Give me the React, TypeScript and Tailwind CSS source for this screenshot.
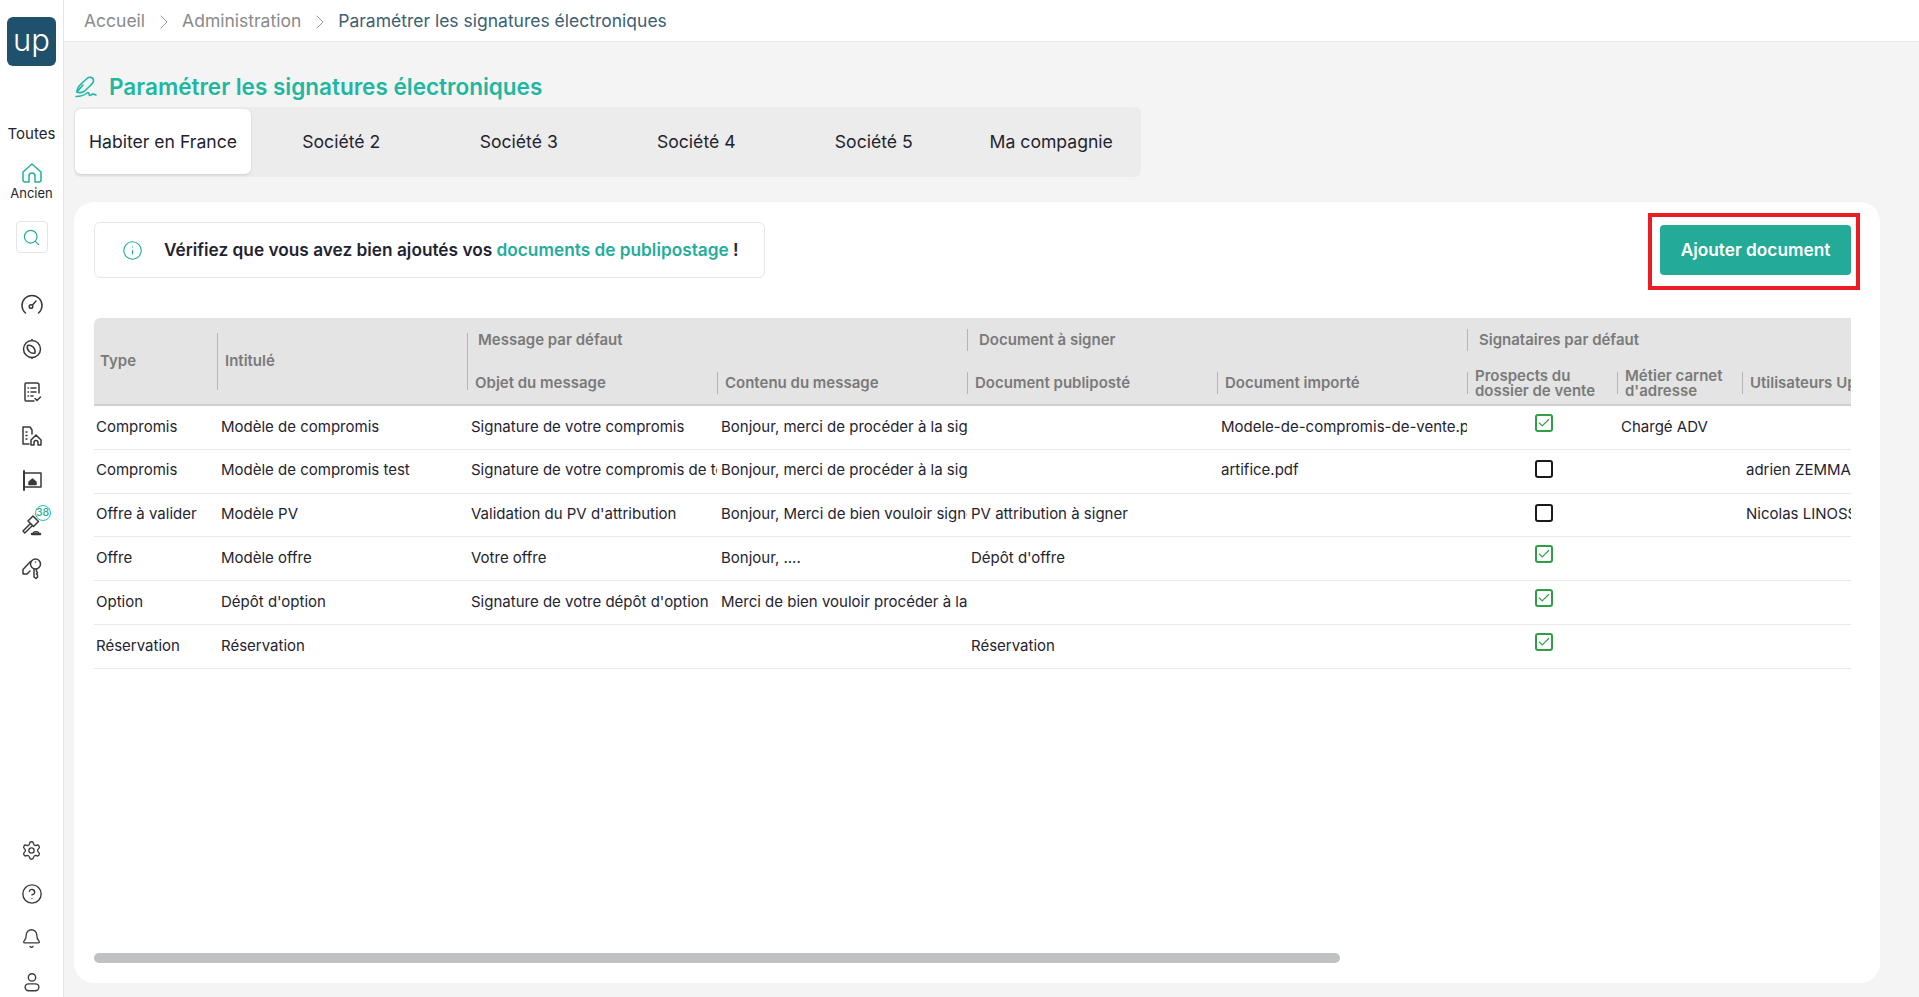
import React, { FC, ReactNode } from "react"
import { ChevronRight, Settings, CircleHelp, Bell, Search, Info, Check } from "lucide-react"

const font = { fontFamily: "Inter, sans-serif" }

const Ico: FC<{ children: ReactNode; size?: number; className?: string }> = ({ children, size = 24, className }) => (
  <svg width={size} height={size} viewBox="0 0 24 24" fill="none" stroke="currentColor" strokeWidth="1.5" strokeLinecap="round" strokeLinejoin="round" className={className}>
    {children}
  </svg>
)

const rows = [
  { type: "Compromis", title: "Modèle de compromis", subject: "Signature de votre compromis", body: "Bonjour, merci de procéder à la signature", merged: "", imported: "Modele-de-compromis-de-vente.pdf", checked: true, job: "Chargé ADV", users: "" },
  { type: "Compromis", title: "Modèle de compromis test", subject: "Signature de votre compromis de test", body: "Bonjour, merci de procéder à la signature", merged: "", imported: "artifice.pdf", checked: false, job: "", users: "adrien ZEMMA" },
  { type: "Offre à valider", title: "Modèle PV", subject: "Validation du PV d'attribution", body: "Bonjour, Merci de bien vouloir signer", merged: "PV attribution à signer", imported: "", checked: false, job: "", users: "Nicolas LINOSSIER" },
  { type: "Offre", title: "Modèle offre", subject: "Votre offre", body: "Bonjour, ....", merged: "Dépôt d'offre", imported: "", checked: true, job: "", users: "" },
  { type: "Option", title: "Dépôt d'option", subject: "Signature de votre dépôt d'option", body: "Merci de bien vouloir procéder à la signature", merged: "", imported: "", checked: true, job: "", users: "" },
  { type: "Réservation", title: "Réservation", subject: "", body: "", merged: "Réservation", imported: "", checked: true, job: "", users: "" },
]

const tabs = ["Habiter en France", "Société 2", "Société 3", "Société 4", "Société 5", "Ma compagnie"]

const Cell: FC<{ children?: ReactNode; w: string }> = ({ children, w }) => (
  <div className={`${w} shrink-0 pb-[1px] pl-[2px] pr-[2px]`}>
    <div className="overflow-hidden whitespace-nowrap">{children}</div>
  </div>
)

const HeadCell: FC<{ children: ReactNode; w: string }> = ({ children, w }) => (
  <div className={`${w} shrink-0 -ml-[2px] mr-[2px] flex items-center`}>
    <div className="flex h-[22px] items-center whitespace-nowrap border-l border-[#b5b5b5] pl-[7px]">{children}</div>
  </div>
)

const Sidebar: FC = () => (
  <aside className="flex h-full w-[64px] shrink-0 flex-col items-center border-r border-[#e3e3e3] bg-white text-[#3a3a3a]">
    <div className="mt-[17px] flex h-[49px] w-[49px] items-center justify-center rounded-[6px] bg-[#1f516c] pb-[5px] text-[31px] font-light leading-none text-white">up</div>
    <div className="mt-[59px] text-[15px] leading-[17px] text-[#1f2430]">Toutes</div>
    <div className="mt-[19px] text-[#25ad9b]">
      <Ico size={24}>
        <path d="M3 11 12 3l9 8v8a2 2 0 0 1-2 2h-4v-6a3 3 0 0 0-6 0v6H5a2 2 0 0 1-2-2z" />
      </Ico>
    </div>
    <div className="text-[13px] leading-[17px] text-[#1f2430]">Ancien</div>
    <div className="mt-[19px] flex h-[32px] w-[32px] items-center justify-center rounded-[4px] border border-[#e5e5e5] text-[#25ad9b]">
      <Search size={19} strokeWidth={1.5} />
    </div>
    <div className="mt-[30px] flex flex-col items-center">
      <div className="flex h-[43.800px] items-center">
        <Ico>
          <path d="M5.500 20a10 10 0 1 1 13 0" />
          <circle cx="11" cy="13.500" r="1.800" />
          <path d="m12.500 12 3.500-4" />
        </Ico>
      </div>
      <div className="flex h-[43.800px] items-center">
        <Ico>
          <circle cx="12" cy="12" r="8.500" />
          <path d="M7.500 8.500c4-1.500 8.500 3 7.500 7.500-4 1.500-9-3-7.500-7.500z" />
          <path d="M12 2.500v1M12 20.500v1" />
        </Ico>
      </div>
      <div className="flex h-[43.800px] items-center">
        <Ico>
          <path d="M19 13V5a2 2 0 0 0-2-2H6a1 1 0 0 0-1 1v16a1 1 0 0 0 1 1h8" />
          <path d="M8 8h.5M11 8h5M8 12h.5M11 12h5M8 16h.5M11 16h2" />
          <path d="m15 18.500 2 2 3.500-3.500" />
        </Ico>
      </div>
      <div className="flex h-[43.800px] items-center">
        <Ico>
          <path d="M9 20H3V3h7l2 3v4" />
          <path d="M6 8h1M6 11.500h1M6 15h1" />
          <path d="M11 21v-5l5-5 5 5v5h-3v-2.500a2 2 0 0 0-4 0V21z" />
        </Ico>
      </div>
      <div className="flex h-[43.800px] items-center">
        <Ico>
          <path d="M4 22V3" strokeWidth="2" />
          <path d="M4 5h17v14H4" />
          <path d="M9 14l3.500-3 3.500 3v2.500H9z" fill="currentColor" />
        </Ico>
      </div>
      <div className="relative flex h-[43.800px] items-center">
        <Ico>
          <path d="M8 9l5-5 5.500 5.500-5 5z" />
          <path d="M10.500 11.500 3 19l1.800 2 7.700-7.500" />
          <path d="M12 22h8" strokeWidth="2.500" />
          <path d="M13.500 20.500c.5-1 4.500-1 5 0" />
        </Ico>
        <span className="absolute left-[15px] top-[3px] flex h-[16px] w-[16px] items-center justify-center rounded-full border border-[#25c0aa] bg-white text-[10.500px] font-medium leading-none text-[#25ad9b]">38</span>
      </div>
      <div className="flex h-[43.800px] items-center">
        <Ico>
          <circle cx="15.500" cy="8" r="5" />
          <path d="M14 13v8l2 1.500 1.500-1.500v-2l-1-1 1-1.500-1-1V13" />
          <path d="M15.500 6h.01" />
          <path d="M10.500 5.500 3 13.500V18l4 0 3-3" />
        </Ico>
      </div>
    </div>
    <div className="-mb-[7px] mt-auto flex flex-col items-center">
      <div className="flex h-[44px] items-center"><Settings size={21} strokeWidth={1.5} /></div>
      <div className="flex h-[44px] items-center"><CircleHelp size={22} strokeWidth={1.5} /></div>
      <div className="flex h-[44px] items-center"><Bell size={21} strokeWidth={1.5} /></div>
      <div className="flex h-[44px] items-center">
        <Ico size={22}>
          <circle cx="12" cy="7" r="4" />
          <rect x="4.500" y="14" width="15" height="7.500" rx="3.750" />
        </Ico>
      </div>
    </div>
  </aside>
)

export default function App() {
  return (
    <div className="flex h-[997px] w-full overflow-hidden bg-[#f4f4f4]" style={font}>
      <Sidebar />
      <main className="flex min-w-0 flex-1 flex-col">
        <div className="flex h-[42px] shrink-0 items-center gap-[6.500px] border-b border-[#e5e5e5] bg-white pl-[20px] pt-[2px] text-[17.500px] text-[#8a8a8a]">
          <span>Accueil</span>
          <ChevronRight size={24} strokeWidth={1} className="text-[#9a9a9a]" />
          <span>Administration</span>
          <ChevronRight size={24} strokeWidth={1} className="text-[#9a9a9a]" />
          <span className="text-[#3d6072]">Paramétrer les signatures électroniques</span>
        </div>
        <div className="flex min-h-0 flex-1 flex-col pb-[14px] pl-[10px] pr-[39px]">
          <div className="mt-[30px] flex h-[30px] items-center gap-[12px] pl-[1px] text-[22.500px] font-semibold text-[#1eb7a1]">
            <svg width="22" height="23" viewBox="0 0 22 23" fill="none" stroke="currentColor" strokeWidth="1.600" strokeLinecap="round" strokeLinejoin="round" className="shrink-0">
              <path d="M2 16c0-3 2-6 4-8l6-5.500c2-2 6-1.500 6.500 1.500.5 2-1.500 4-3.500 6l-6 5.500c-2 1-5 1.500-7 .5z" />
              <path d="m2 16 6-7" />
              <path d="M1 20.500c4 0 8-1 11-3.500 1-1 2 0 2 1s1 2 2 1 3-1 5 0" />
            </svg>
            <span>Paramétrer les signatures électroniques</span>
          </div>
          <div className="mt-[5px] flex h-[70px] w-[1067px] shrink-0 items-start rounded-[6px] bg-[#ececec] pl-[1px] pt-[2px] text-[17.600px] text-[#1f2430]">
            {tabs.map((t, i) => (
              <div key={t} className={i === 0 ? "mr-[1.500px] flex h-[65px] w-[176px] items-center justify-center rounded-[6px] bg-white pt-[2px] shadow-sm" : "flex h-[65px] w-[177.500px] items-center justify-center pt-[2px]"}>
                {t}
              </div>
            ))}
          </div>
          <section className="mt-[25px] flex min-h-0 flex-1 flex-col rounded-[20px] bg-white px-[20px]">
            <div className="flex shrink-0 items-start justify-between pt-[20px]">
              <div className="flex h-[56px] w-[671px] items-center rounded-[6px] border border-[#e6e6e6] pl-[27px] text-[17.250px] font-semibold text-[#1f2430]">
                <Info size={21} strokeWidth={1.25} className="mr-[21px] text-[#25ad9b]" />
                <span>Vérifiez que vous avez bien ajoutés vos <span className="text-[#25ad9b]">documents de publipostage</span> !</span>
              </div>
              <div className="-mt-[9px] border-4 border-[#ec1c24] pb-[11px] pl-[8px] pr-[5px] pt-[8px]">
                <button className="flex h-[50px] w-[191px] items-center justify-center rounded-[4px] bg-[#23ab97] text-[17.250px] font-semibold text-white">Ajouter document</button>
              </div>
            </div>
            <div className="mt-[28px] min-h-0 flex-1 overflow-hidden text-[15px] text-[#1f2430]">
              <div className="w-[1757px] overflow-hidden">
                <div className="flex h-[88px] w-[2100px] rounded-t-[6px] border-b-2 border-[#cfcfcf] bg-[#e4e4e4] font-semibold text-[#7a7a7a]">
                  <div className="flex w-[125px] shrink-0 items-center pl-[6px]">Type</div>
                  <div className="flex w-[250px] shrink-0 items-center">
                    <div className="-ml-[2px] flex h-[57px] items-center border-l border-[#b5b5b5] pl-[7px]">Intitulé</div>
                  </div>
                  <div className="flex w-[500px] shrink-0 flex-col">
                    <div className="h-[44px] shrink-0 pt-[15px]">
                      <div className="-ml-[2px] flex h-[29px] items-start border-l border-[#b5b5b5] pl-[10px]">
                        <div className="-mt-[4px]">Message par défaut</div>
                      </div>
                    </div>
                    <div className="flex h-[44px] shrink-0 items-center pb-[2px]">
                      <div className="-ml-[2px] mr-[2px] h-[28px] w-[250px] shrink-0 self-start whitespace-nowrap border-l border-[#b5b5b5] pl-[7px] pt-[10px]">Objet du message</div>
                      <HeadCell w="w-[250px]">Contenu du message</HeadCell>
                    </div>
                  </div>
                  <div className="flex w-[500px] shrink-0 flex-col">
                    <div className="flex h-[44px] shrink-0 items-center">
                      <div className="-ml-[2px] flex h-[22px] items-center border-l border-[#b5b5b5] pl-[11px]">Document à signer</div>
                    </div>
                    <div className="flex h-[44px] shrink-0 items-center pb-[2px]">
                      <HeadCell w="w-[250px]">Document publiposté</HeadCell>
                      <HeadCell w="w-[250px]">Document importé</HeadCell>
                    </div>
                  </div>
                  <div className="flex w-[600px] shrink-0 flex-col">
                    <div className="flex h-[44px] shrink-0 items-center">
                      <div className="-ml-[2px] flex h-[22px] items-center border-l border-[#b5b5b5] pl-[11px]">Signataires par défaut</div>
                    </div>
                    <div className="flex h-[44px] shrink-0 items-center pb-[2px] leading-[15.500px]">
                      <HeadCell w="w-[150px]"><span>Prospects du<br />dossier de vente</span></HeadCell>
                      <HeadCell w="w-[125px]"><span>Métier carnet<br />d'adresse</span></HeadCell>
                      <HeadCell w="w-[250px]">Utilisateurs Up</HeadCell>
                    </div>
                  </div>
                </div>
                {rows.map((r) => (
                  <div key={r.title} className="flex h-[43.800px] w-[2100px] items-center border-b border-[#e9e9e9]">
                    <Cell w="w-[125px]">{r.type}</Cell>
                    <Cell w="w-[250px]">{r.title}</Cell>
                    <Cell w="w-[250px]">{r.subject}</Cell>
                    <Cell w="w-[250px]">{r.body}</Cell>
                    <Cell w="w-[250px]">{r.merged}</Cell>
                    <Cell w="w-[250px]">{r.imported}</Cell>
                    <div className="flex w-[150px] shrink-0 justify-center">
                      {r.checked ? (
                        <span className="mb-[9px] flex h-[18px] w-[18px] items-center justify-center rounded-[3px] border-2 border-[#2f9e44] text-[#2f9e44]">
                          <Check size={14} strokeWidth={2} />
                        </span>
                      ) : (
                        <span className="mb-[4px] h-[18px] w-[18px] rounded-[3px] border-2 border-[#1a1a1a]" />
                      )}
                    </div>
                    <Cell w="w-[125px]">{r.job}</Cell>
                    <Cell w="w-[250px]">{r.users}</Cell>
                  </div>
                ))}
              </div>
            </div>
            <div className="mb-[20px] h-[10px] w-[1246px] shrink-0 rounded-full bg-[#c0c1c3]" />
          </section>
        </div>
      </main>
    </div>
  )
}
